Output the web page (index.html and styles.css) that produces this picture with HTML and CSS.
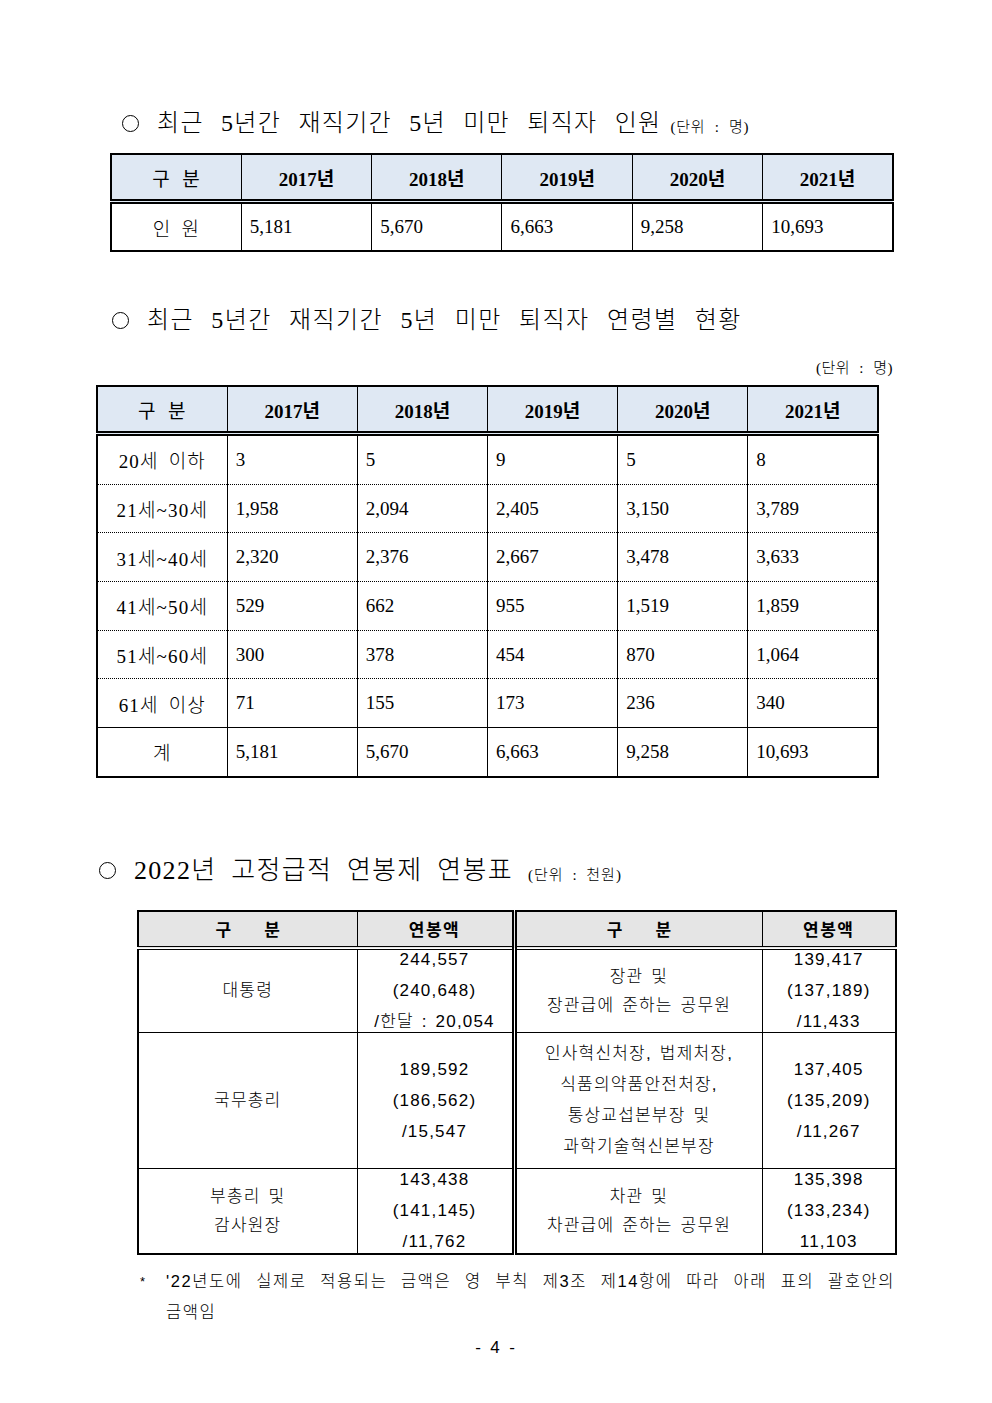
FILE: index.html
```html
<!DOCTYPE html>
<html lang="ko">
<head>
<meta charset="utf-8">
<title>퇴직자 현황</title>
<link rel="stylesheet" href="styles.css">
</head>
<body>
<div class="page">
  <div class="heading hd1">
    <span class="bullet"></span>
    <span class="title">최근 5년간 재직기간 5년 미만 퇴직자 인원</span>
    <span class="unit">(단위 : 명)</span>
  </div>

  <table class="tbl t1">
    <thead>
      <tr><th>구&nbsp; 분</th><th>2017년</th><th>2018년</th><th>2019년</th><th>2020년</th><th>2021년</th></tr>
    </thead>
    <tbody>
      <tr><td class="lab">인 원</td><td>5,181</td><td>5,670</td><td>6,663</td><td>9,258</td><td>10,693</td></tr>
    </tbody>
  </table>

  <div class="heading hd2">
    <span class="bullet"></span>
    <span class="title wide">최근 5년간 재직기간 5년 미만 퇴직자 연령별 현황</span>
  </div>
  <div class="unit-right">(단위 : 명)</div>

  <table class="tbl t2">
    <thead>
      <tr><th>구&nbsp; 분</th><th>2017년</th><th>2018년</th><th>2019년</th><th>2020년</th><th>2021년</th></tr>
    </thead>
    <tbody>
      <tr><td class="lab">20세 이하</td><td>3</td><td>5</td><td>9</td><td>5</td><td>8</td></tr>
      <tr><td class="lab">21세~30세</td><td>1,958</td><td>2,094</td><td>2,405</td><td>3,150</td><td>3,789</td></tr>
      <tr><td class="lab">31세~40세</td><td>2,320</td><td>2,376</td><td>2,667</td><td>3,478</td><td>3,633</td></tr>
      <tr><td class="lab">41세~50세</td><td>529</td><td>662</td><td>955</td><td>1,519</td><td>1,859</td></tr>
      <tr><td class="lab">51세~60세</td><td>300</td><td>378</td><td>454</td><td>870</td><td>1,064</td></tr>
      <tr><td class="lab">61세 이상</td><td>71</td><td>155</td><td>173</td><td>236</td><td>340</td></tr>
      <tr class="total"><td class="lab">계</td><td>5,181</td><td>5,670</td><td>6,663</td><td>9,258</td><td>10,693</td></tr>
    </tbody>
  </table>

  <div class="heading hd3">
    <span class="bullet"></span>
    <span class="title big">2022년 고정급적 연봉제 연봉표</span>
    <span class="unit u3">(단위 : 천원)</span>
  </div>

  <table class="t3">
    <colgroup><col class="c1"><col class="c2"><col class="c3"><col class="c4"></colgroup>
    <thead>
      <tr><th>구&nbsp;&nbsp;&nbsp;&nbsp;&nbsp;&nbsp;&nbsp;분</th><th class="sp">연봉액</th><th class="mid">구&nbsp;&nbsp;&nbsp;&nbsp;&nbsp;&nbsp;&nbsp;분</th><th class="sp">연봉액</th></tr>
    </thead>
    <tbody>
      <tr class="r1">
        <td><div class="c"><div>대통령</div></div></td>
        <td><div class="c"><div>244,557</div><div>(240,648)</div><div>/한달 : 20,054</div></div></td>
        <td class="mid"><div class="c tight"><div>장관 및</div><div>장관급에 준하는 공무원</div></div></td>
        <td><div class="c"><div>139,417</div><div>(137,189)</div><div>/11,433</div></div></td>
      </tr>
      <tr class="r2">
        <td><div class="c"><div>국무총리</div></div></td>
        <td><div class="c"><div>189,592</div><div>(186,562)</div><div>/15,547</div></div></td>
        <td class="mid"><div class="c"><div>인사혁신처장, 법제처장,</div><div>식품의약품안전처장,</div><div>통상교섭본부장 및</div><div>과학기술혁신본부장</div></div></td>
        <td><div class="c"><div>137,405</div><div>(135,209)</div><div>/11,267</div></div></td>
      </tr>
      <tr class="r3">
        <td><div class="c tight"><div>부총리 및</div><div>감사원장</div></div></td>
        <td><div class="c"><div>143,438</div><div>(141,145)</div><div>/11,762</div></div></td>
        <td class="mid"><div class="c tight"><div>차관 및</div><div>차관급에 준하는 공무원</div></div></td>
        <td><div class="c"><div>135,398</div><div>(133,234)</div><div>11,103</div></div></td>
      </tr>
    </tbody>
  </table>

  <div class="note">
    <span class="star">*</span>
    <div class="note-body">
      <div class="just">'22년도에 실제로 적용되는 금액은 영 부칙 제3조 제14항에 따라 아래 표의 괄호안의</div>
      <div>금액임</div>
    </div>
  </div>

  <div class="pageno">-&nbsp; 4&nbsp; -</div>
</div>
</body>
</html>
```

FILE: styles.css
```css
html, body {
  margin: 0;
  padding: 0;
  background: #ffffff;
  color: #000000;
}

.page {
  width: 992px;
  padding-top: 110px;
  font-family: "Liberation Serif", "Noto Sans CJK KR", serif;
}

/* headings */
.heading {
  display: flex;
  align-items: center;
  height: 26px;
  white-space: nowrap;
}

.hd1 { margin-left: 122px; }
.hd2 { margin-left: 112px; margin-top: 55px; }
.hd3 { margin-left: 99px; margin-top: 80px; }

.bullet {
  flex: none;
  width: 17px;
  height: 17px;
  box-sizing: border-box;
  border: 1.4px solid #000;
  border-radius: 50%;
  margin-right: 18px;
}

.title {
  font-size: 24px;
  line-height: 26px;
  font-weight: 300;
  word-spacing: 10px;
  letter-spacing: 1.3px;
}

.title.wide {
  letter-spacing: 1.4px;
}

.title.big {
  font-size: 26px;
  word-spacing: 7px;
  letter-spacing: 1.3px;
}

.unit {
  font-size: 15px;
  margin-left: 9px;
  margin-top: 5px;
  font-weight: 300;
  word-spacing: 5px;
  letter-spacing: 0.7px;
}

.unit.u3 {
  font-size: 15px;
  margin-left: 15px;
  word-spacing: 4px;
  letter-spacing: 1px;
}

.unit-right {
  width: 893px;
  text-align: right;
  font-size: 15px;
  line-height: 18px;
  margin-top: 26px;
  font-weight: 300;
  word-spacing: 5px;
  letter-spacing: 0.5px;
}

/* tables 1 and 2 */
.tbl {
  border-collapse: collapse;
  table-layout: fixed;
  border: 2px solid #000;
  font-family: "Liberation Serif", "Noto Sans CJK KR", serif;
}

.t1 {
  width: 784px;
  margin: 17px 0 0 110px;
}

.t2 {
  width: 783px;
  margin: 8px 0 0 96px;
}

.tbl th {
  background: #dfe8f3;
  border: 1px solid #000;
  border-bottom: 5px double #000;
  font-size: 19px;
  font-weight: 700;
  height: 44px;
  padding: 0;
  text-align: center;
}

.tbl th:first-child {
  font-weight: 400;
  letter-spacing: 1px;
}

.tbl td {
  border-left: 1px solid #000;
  border-right: 1px solid #000;
  border-top: none;
  border-bottom: none;
  font-size: 19px;
  padding: 0 0 0 8px;
  text-align: left;
  height: 46px;
  font-weight: 300;
}

.tbl td.lab {
  text-align: center;
  padding: 0;
  letter-spacing: 1.2px;
  word-spacing: 4px;
}

.t2 td {
  height: 47.7px;
}

.t2 tbody tr + tr td {
  border-top: 1px dotted #000;
}

.t2 tbody tr.total td {
  border-top: 1px solid #000;
}

/* table 3 */
.t3 {
  border-collapse: collapse;
  table-layout: fixed;
  width: 758px;
  margin: 26px 0 0 137px;
  border: 2px solid #000;
  font-family: "Liberation Sans", "Noto Sans CJK KR", sans-serif;
  font-size: 17px;
}

.t3 .c1 { width: 219px; }
.t3 .c2 { width: 157px; }
.t3 .c3 { width: 248px; }
.t3 .c4 { width: 134px; }

.t3 th {
  background: #e5e5e5;
  border: 1px solid #000;
  border-bottom: 4px double #000;
  height: 34px;
  padding: 0;
  font-size: 17px;
  font-weight: 700;
  text-align: center;
}

.t3 th.sp {
  letter-spacing: 1.5px;
}

.t3 .mid {
  border-left: 5px double #000;
}

.t3 td {
  border: 1px solid #000;
  padding: 0;
  text-align: center;
  vertical-align: middle;
  font-weight: 300;
}

.t3 td.mid {
  border-left: 5px double #000;
}

.c {
  display: flex;
  flex-direction: column;
  justify-content: center;
  align-items: center;
  line-height: 31px;
  white-space: nowrap;
  letter-spacing: 1.2px;
  word-spacing: 2px;
}

.c.tight {
  line-height: 29px;
}

.r1 .c { height: 82px; }
.r2 .c { height: 135px; }
.r3 .c { height: 84px; }

/* note */
.note {
  display: flex;
  margin: 11px 0 0 140px;
  width: 755px;
  font-family: "Liberation Sans", "Noto Sans CJK KR", sans-serif;
  font-size: 16.5px;
  line-height: 31px;
  font-weight: 300;
}

.star {
  flex: none;
  width: 26px;
  font-size: 13px;
}

.note-body {
  flex: 1;
  letter-spacing: 1.6px;
}

.just {
  text-align: justify;
  text-align-last: justify;
  white-space: nowrap;
}

.pageno {
  text-align: center;
  font-family: "Liberation Sans", "Noto Sans CJK KR", sans-serif;
  font-size: 17px;
  line-height: 18px;
  margin-top: 11px;
  width: 990px;
}
```
